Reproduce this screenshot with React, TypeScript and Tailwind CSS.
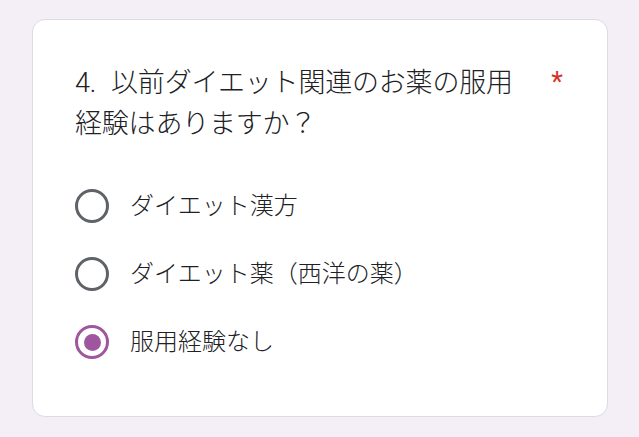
import React from "react";

const font = { fontFamily: '"Roboto", "Noto Sans CJK JP", sans-serif' };

function Radio({ checked }: { checked?: boolean }) {
  return (
    <div
      className={`flex h-[34px] w-[34px] shrink-0 items-center justify-center rounded-full border-[3.4px] ${
        checked ? "border-[#a0569e]" : "border-[#5f6368]"
      }`}
    >
      {checked && <div className="h-[17px] w-[17px] rounded-full bg-[#a0569e]" />}
    </div>
  );
}

export default function App() {
  const options = [
    { label: "ダイエット漢方", checked: false },
    { label: "ダイエット薬（西洋の薬）", checked: false },
    { label: "服用経験なし", checked: true },
  ];
  return (
    <div className="h-[437px] w-[639px] bg-[#f4eef6] pl-[32px] pt-[19px]" style={font}>
      <div className="flex h-[398px] w-[576px] flex-col rounded-[13px] border border-[#dadce0] bg-white pl-[42px] pr-[42px] pt-[43px]">
        <div className="flex items-start text-[#202124]">
          <div className="w-[460px] text-[27px] font-light leading-[41px] tracking-[-0.2px]">
            <span className="mr-[15px]">4.</span>以前ダイエット関連のお薬の服用
            <br />
            経験はありますか？
          </div>
          <span className="ml-auto pr-[2px] text-[27px] leading-[38px] text-[#d93025]">*</span>
        </div>
        <div className="mt-[27px] flex flex-col">
          {options.map((o) => (
            <div key={o.label} className="flex h-[68px] items-center gap-[21px]">
              <Radio checked={o.checked} />
              <span className="text-[24px] font-light leading-[34px] text-[#202124]">{o.label}</span>
            </div>
          ))}
        </div>
      </div>
    </div>
  );
}
